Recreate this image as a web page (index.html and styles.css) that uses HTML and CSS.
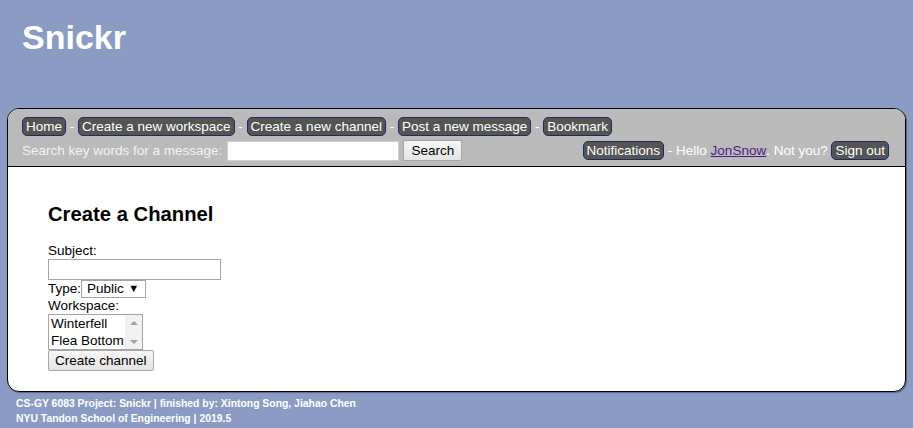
FILE: index.html
```html
<!DOCTYPE html>
<html lang="en">
<head>
<meta charset="utf-8">
<title>Snickr</title>
<link rel="stylesheet" href="styles.css">
</head>
<body>
<h1 class="site-title">Snickr</h1>
<div class="panel">
  <div class="topbar">
    <div class="nav-row">
      <a class="pill" href="#">Home</a> - <a class="pill" href="#">Create a new workspace</a> - <a class="pill" href="#">Create a new channel</a> - <a class="pill" href="#">Post a new message</a> - <a class="pill" href="#">Bookmark</a>
    </div>
    <div class="tool-row">
      <form class="search">
        <label class="search-label" for="kw">Search key words for a message:</label>
        <input class="search-input" id="kw" type="text">
        <button class="btn" type="button">Search</button>
      </form>
      <div class="user">
        <a class="pill" href="#">Notifications</a>&nbsp;- Hello&nbsp;<a class="user-link" href="#">JonSnow</a>. Not you?&nbsp;<a class="pill" href="#">Sign out</a>
      </div>
    </div>
  </div>
  <div class="content">
    <h2 class="page-title">Create a Channel</h2>
    <div class="form">
      <div class="line">Subject:</div>
      <input class="text-input" type="text">
      <div class="line type-row">Type:<div class="dropdown"><span>Public</span><span class="caret">&#9660;</span></div></div>
      <div class="line">Workspace:</div>
      <div class="listbox">
        <div class="options">
          <div class="option">Winterfell</div>
          <div class="option">Flea Bottom</div>
        </div>
        <div class="scroll">
          <span class="arrow up"></span>
          <span class="arrow down"></span>
        </div>
      </div>
      <button class="btn submit" type="button">Create channel</button>
    </div>
  </div>
</div>
<footer class="footer">
  <div>CS-GY 6083 Project: Snickr | finished by: Xintong Song, Jiahao Chen</div>
  <div>NYU Tandon School of Engineering | 2019.5</div>
</footer>
</body>
</html>
```
FILE: styles.css
```css
html, body {
  margin: 0;
  padding: 0;
}
body {
  background: #8a9cc3;
  font-family: "Liberation Sans", Arial, sans-serif;
  font-size: 13.5px;
  line-height: 15.5px;
  color: #000;
  height: 428px;
  overflow: hidden;
}
.site-title {
  margin: 0;
  padding: 18px 22px 0;
  font-size: 34px;
  line-height: 39px;
  font-weight: bold;
  color: #fff;
  height: 39px;
}
.panel {
  margin: 51px 7px 0;
  border: 1px solid #000;
  border-radius: 12px;
  overflow: hidden;
  background: #fff;
  box-shadow: 1px 1px 1px rgba(0,0,0,0.35);
}
.topbar {
  background: #bababa;
  border-bottom: 1px solid #000;
  padding: 8px 16px 5px 14px;
  color: #fff;
}
.nav-row {
  height: 19px;
  display: flex;
  align-items: center;
  white-space: pre;
}
.pill {
  display: inline-block;
  background: #555;
  color: #fff;
  text-decoration: none;
  border: 1px solid #1b2d63;
  border-radius: 5px;
  padding: 0 3px;
  line-height: 17px;
}
.tool-row {
  margin-top: 4px;
  height: 21px;
  display: flex;
  align-items: center;
  justify-content: space-between;
}
.search {
  display: flex;
  align-items: center;
  margin: 0;
}
.search-label {
  color: #f2f2f2;
}
.search-input {
  box-sizing: border-box;
  width: 172px;
  height: 20px;
  margin: 0 0 0 5px;
  border: 1px solid #cfcfcf;
  background: #fff;
  padding: 0 2px;
  font: inherit;
}
.btn {
  box-sizing: border-box;
  font: inherit;
  color: #000;
  background: linear-gradient(#f6f6f6, #e4e4e4);
  border: 1px solid #a6a6a6;
  border-radius: 2px;
  padding: 0 6px;
  height: 21px;
  line-height: 17px;
}
.search .btn {
  margin-left: 4px;
  width: 59px;
}
.user {
  display: flex;
  align-items: center;
  white-space: pre;
  color: #fff;
}
.user-link {
  color: #551a8b;
  text-decoration: underline;
}
.content {
  padding: 36px 40px 20px;
}
.page-title {
  margin: 0 0 17px;
  font-size: 20.25px;
  line-height: 23px;
  font-weight: bold;
}
.form {
  display: flex;
  flex-direction: column;
  align-items: flex-start;
}
.line {
  height: 16px;
  line-height: 15.5px;
}
.text-input {
  box-sizing: border-box;
  width: 173px;
  height: 21px;
  margin: 0;
  border: 1px solid #a4a4a4;
  padding: 0 2px;
  font: inherit;
}
.type-row {
  display: flex;
  align-items: center;
  height: 18px;
}
.dropdown {
  box-sizing: border-box;
  width: 65px;
  height: 18px;
  border: 1px solid #a4a4a4;
  display: flex;
  align-items: center;
  justify-content: space-between;
  padding: 0 6px 0 5px;
}
.caret {
  font-size: 11px;
}
.listbox {
  box-sizing: border-box;
  width: 95px;
  height: 36px;
  border: 1px solid #a4a4a4;
  display: flex;
  margin-top: 0;
}
.options {
  flex: 1;
  padding-left: 2px;
}
.option {
  height: 17px;
  line-height: 17px;
  white-space: nowrap;
}
.scroll {
  width: 17px;
  background: #f1f1f1;
  display: flex;
  flex-direction: column;
  justify-content: space-between;
  align-items: center;
  padding: 6px 0 5px;
  box-sizing: border-box;
}
.arrow {
  width: 0;
  height: 0;
  border-left: 4px solid transparent;
  border-right: 4px solid transparent;
}
.arrow.up {
  border-bottom: 4px solid #a3a3a3;
}
.arrow.down {
  border-top: 4px solid #a3a3a3;
}
.submit {
  padding: 0 6px;
  height: 21px;
}
.footer {
  padding: 4px 16px 0;
  font-size: 10.4px;
  line-height: 15px;
  font-weight: bold;
  color: #fff;
}
```
